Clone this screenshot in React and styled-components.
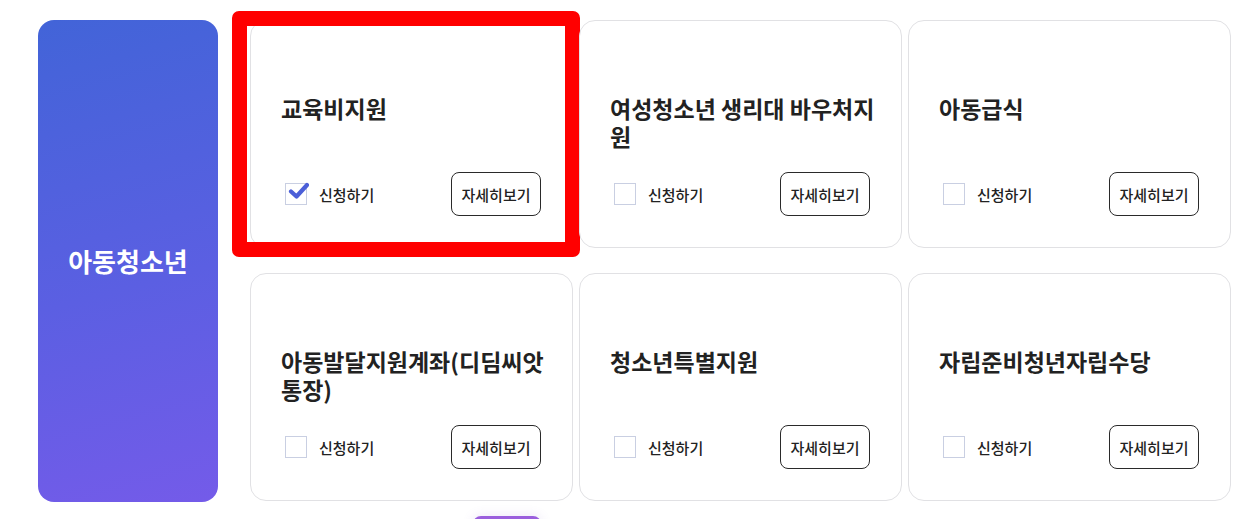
import React from "react";
import styled, { createGlobalStyle } from "styled-components";

const Global = createGlobalStyle`
  html, body { margin: 0; padding: 0; background: #ffffff; }
  body { font-family: "Noto Sans CJK KR", "Noto Sans", sans-serif; color: #222; overflow: hidden; }
`;

const Page = styled.div`
  position: relative;
  width: 1259px;
  height: 519px;
  box-sizing: border-box;
  padding: 20px 28px 0 38px;
  display: flex;
  gap: 32px;
  align-items: flex-start;
`;

const Category = styled.div`
  width: 180px;
  height: 482px;
  flex: none;
  border-radius: 16px;
  background: linear-gradient(165deg, #4264d8 0%, #5b5fe2 55%, #745be9 100%);
  display: flex;
  align-items: center;
  justify-content: center;
  color: #fff;
  font-size: 26px;
  font-weight: 700;
  padding-bottom: 2px;
  box-sizing: border-box;
`;

const Grid = styled.div`
  width: 981px;
  display: grid;
  grid-template-columns: repeat(3, 1fr);
  column-gap: 6px;
  row-gap: 25px;
`;

const Card = styled.div`
  position: relative;
  height: 228px;
  box-sizing: border-box;
  border: 1px solid #e1e1e4;
  border-radius: 16px;
  background: #fff;
  padding: 73px 19px 31px 30px;
  display: flex;
  flex-direction: column;
`;

const Highlight = styled.div`
  position: absolute;
  top: -10px;
  left: -19px;
  right: -8px;
  bottom: -10px;
  border: 15px solid #ff0000;
  border-radius: 7px;
  pointer-events: none;
`;

const Title = styled.h3`
  margin: 0;
  font-size: 23px;
  line-height: 28px;
  font-weight: 700;
  color: #222;
`;

const Bottom = styled.div`
  margin-top: auto;
  display: flex;
  align-items: center;
  justify-content: space-between;
  padding: 0 12px 0 4px;
`;

const Apply = styled.label`
  display: flex;
  align-items: center;
  gap: 12px;
  font-size: 15px;
  font-weight: 500;
  color: #222;
`;

const Box = styled.span`
  position: relative;
  width: 22px;
  height: 22px;
  box-sizing: border-box;
  border: 1px solid #c9cfe2;
  background: #fff;
  display: inline-block;
`;

const Check = styled.svg`
  position: absolute;
  left: 2px;
  top: -2px;
  width: 21px;
  height: 18px;
`;

const DetailButton = styled.button`
  width: 90px;
  height: 44px;
  box-sizing: border-box;
  border: 1px solid #2a2a2a;
  border-radius: 8px;
  background: #fff;
  font-family: inherit;
  font-size: 15px;
  font-weight: 500;
  color: #222;
  padding: 0;
  cursor: pointer;
`;

const FloatTab = styled.div`
  position: absolute;
  left: 473px;
  top: 516px;
  width: 68px;
  height: 24px;
  border-radius: 8px;
  background: #9b5fdd;
  box-shadow: 0 0 12px rgba(120, 80, 200, 0.15);
`;

const items = [
  { title: "교육비지원", checked: true },
  { title: "여성청소년 생리대 바우처지원" },
  { title: "아동급식" },
  { title: "아동발달지원계좌(디딤씨앗 통장)" },
  { title: "청소년특별지원" },
  { title: "자립준비청년자립수당" },
];

export default function App() {
  return (
    <>
      <Global />
      <Page>
        <Category>아동청소년</Category>
        <Grid>
          {items.map((it, i) => (
            <Card key={i}>
              <Title>{it.title}</Title>
              <Bottom>
                <Apply>
                  <Box>
                    {it.checked && (
                      <Check viewBox="0 0 21 18">
                        <path
                          d="M3 9.5 L8.5 14.5 L19 3"
                          fill="none"
                          stroke="#4b5fd8"
                          strokeWidth="4.2"
                          strokeLinecap="round"
                          strokeLinejoin="round"
                        />
                      </Check>
                    )}
                  </Box>
                  신청하기
                </Apply>
                <DetailButton>자세히보기</DetailButton>
              </Bottom>
              {it.checked && <Highlight />}
            </Card>
          ))}
        </Grid>
        <FloatTab />
      </Page>
    </>
  );
}
